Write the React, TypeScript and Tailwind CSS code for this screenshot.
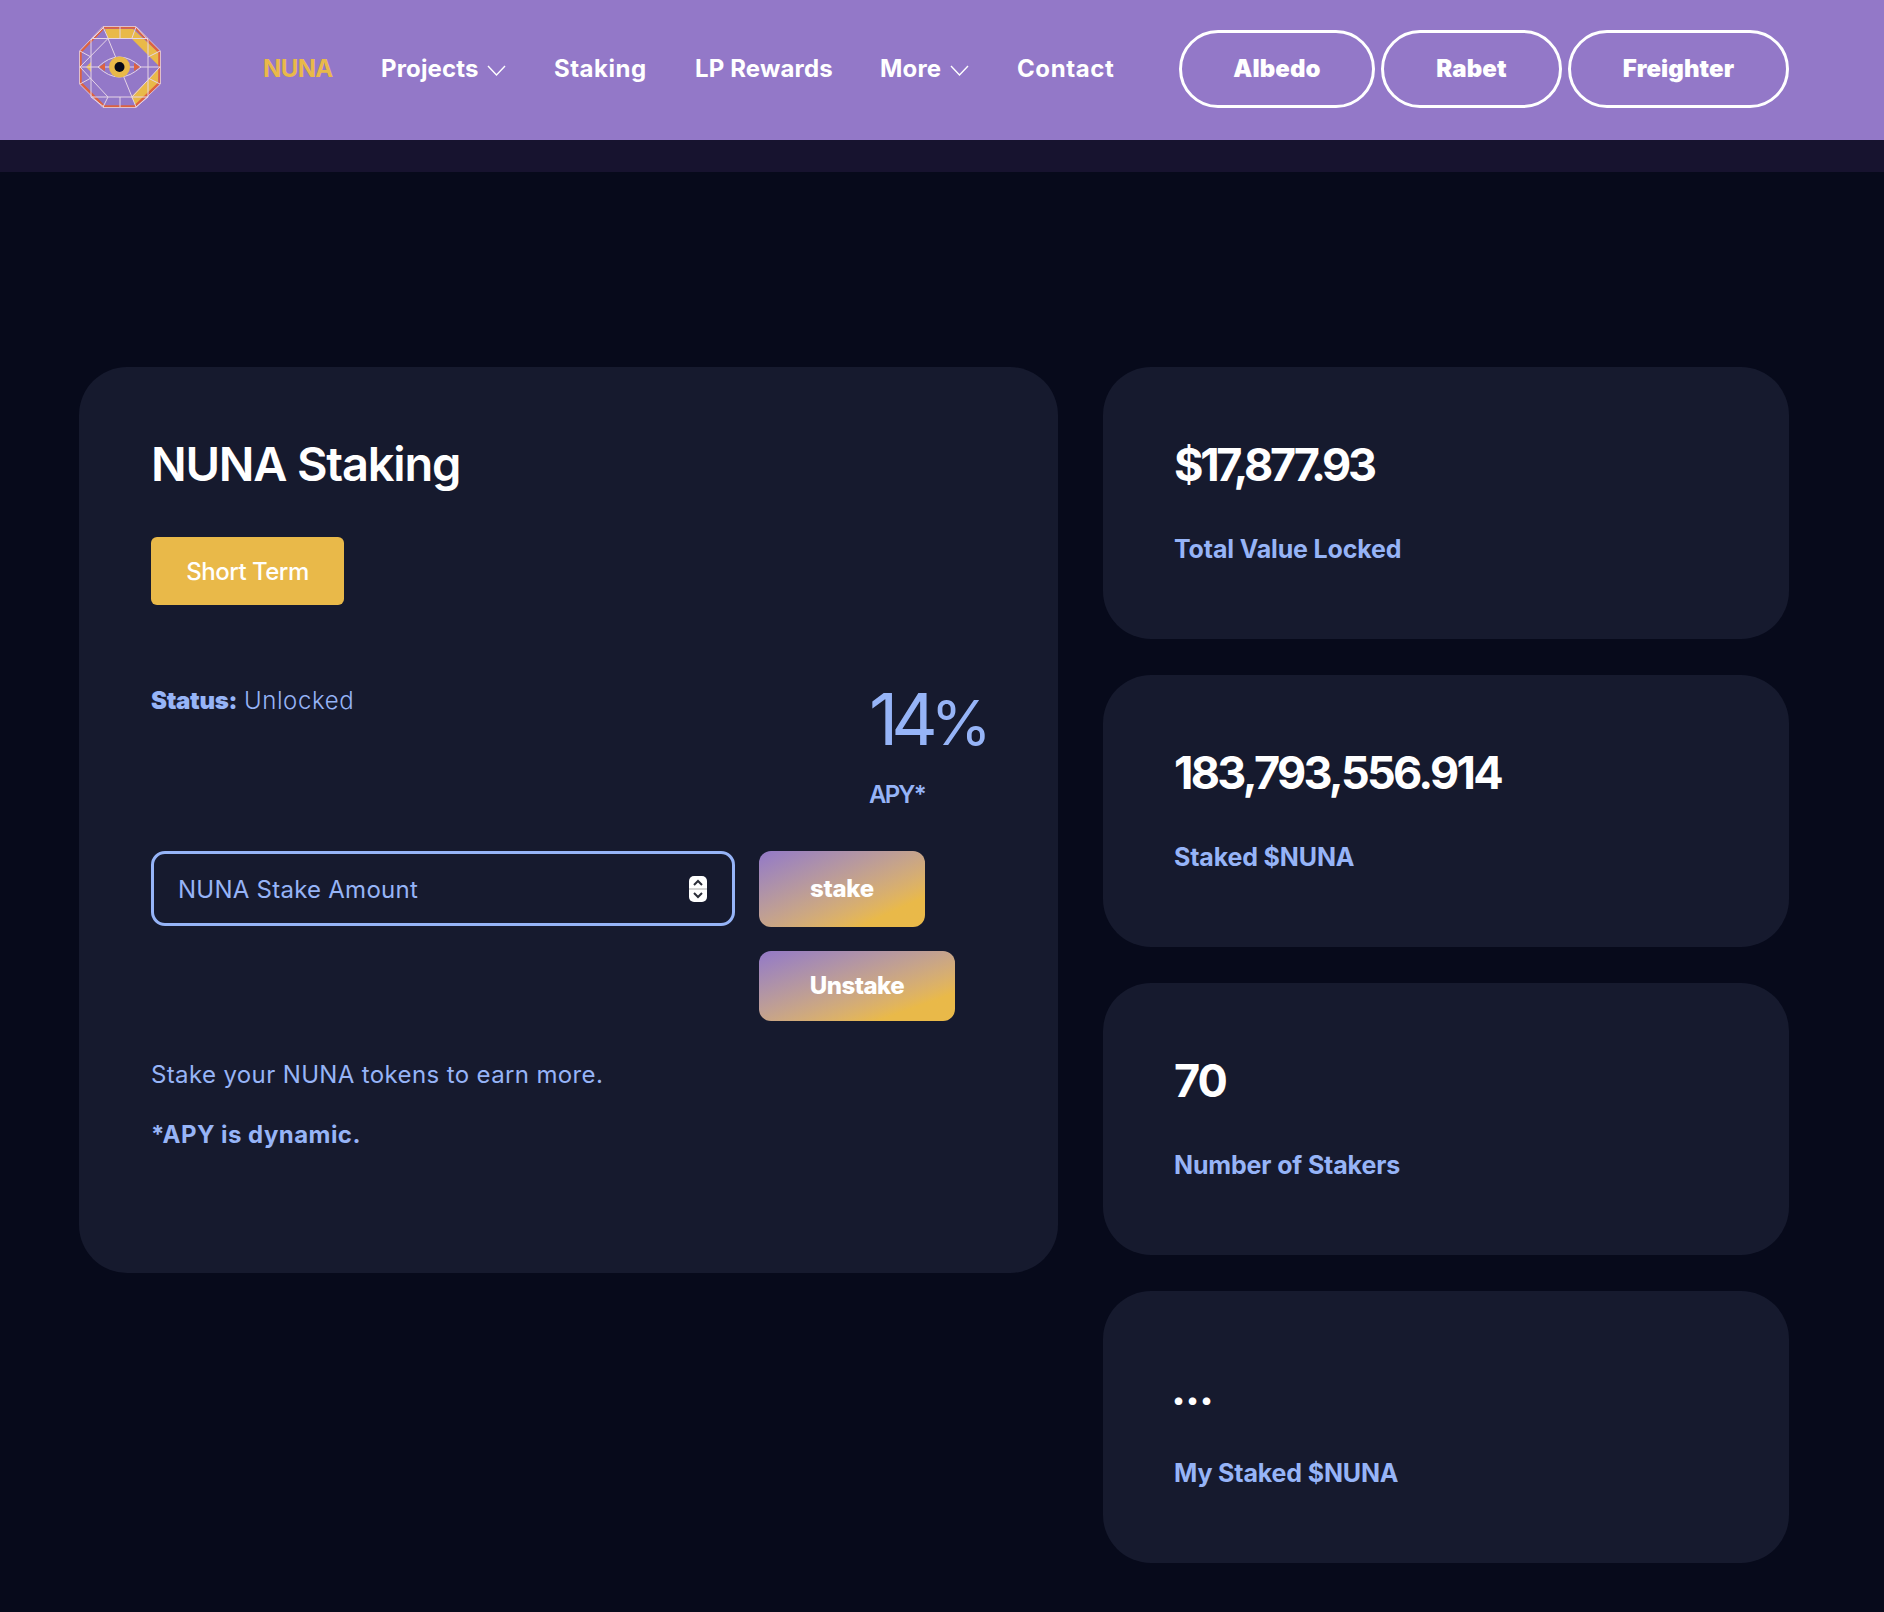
const FONT = "font-['Inter','Liberation_Sans',sans-serif]";

const STATS = [
  { value: "$17,877.93", label: "Total Value Locked", tracking: "tracking-[-3.3px]" },
  { value: "183,793,556.914", label: "Staked $NUNA", tracking: "tracking-[-2.7px]" },
  { value: "70", label: "Number of Stakers", tracking: "tracking-[-2px]" },
  { value: "...", label: "My Staked $NUNA", tracking: "tracking-[-1px] -ml-[3px]" },
];

const Logo = () => (
  <svg width="82" height="82" viewBox="0 0 82 82" fill="none">
    {/* yellow facets */}
    <path d="M26 3H54L80 27V40L69 29L53 13H29Z" fill="#e9b949" />
    <path d="M80 42L79 57L57 79L52 71L69 54Z" fill="#e9b949" />
    <path d="M7 41L12 36V46Z" fill="#e9b949" />
    {/* outer ring */}
    <path d="M25 1.5H56L80.5 26V57L56 80.5H25L1.5 57V26Z" stroke="#dd6240" strokeWidth="2.5" />
    <path d="M24 0.5H57L81.5 25V58L57 81.5H24L0.5 58V25Z" stroke="#e6d5e6" strokeWidth="0.8" />
    {/* wire lines */}
    <g stroke="#e6d5e6" strokeWidth="1">
      <path d="M12 14V71M69 14V71M13 12.5H69M13 71H69" />
      <path d="M0.5 41H81.5M41 1V12M41 71V81" />
      <path d="M29 12.5L53 71M29 12.5L1 41M1 41L29 71M53 71L81 41" />
      <path d="M24 1L29 12M57 1L53 12M12 14L25 1M69 14L57 1M12 71L25 81M69 71L57 81" />
      <path d="M1 25L12 31M81 25L69 31M1 58L12 52M81 58L69 52" />
      <path d="M29 71L24 81M53 71L57 81" />
    </g>
    {/* eye */}
    <path d="M19 41Q40 21 62 41Q40 61 19 41Z" stroke="#e6d5e6" strokeWidth="1" />
    <path d="M20 41L26 37V45Z" fill="#dd6240" />
    <path d="M61 41L55 37V45Z" fill="#dd6240" />
    <circle cx="40.5" cy="41" r="10.5" fill="#e9b949" />
    <circle cx="40.5" cy="41" r="5" fill="#060919" />
  </svg>
);

const Chevron = () => (
  <svg width="19" height="11" viewBox="0 0 19 11" fill="none" className="mt-[3px]">
    <path d="M1 1L9.5 10L18 1" stroke="#fff" strokeWidth="1.4" />
  </svg>
);

const WalletButton = ({ label, width }: { label: string; width: string }) => (
  <button className={`h-[78px] ${width} rounded-[39px] border-[3px] border-white text-[24px] font-black text-white tracking-[0.1px]`}>
    {label}
  </button>
);

const StatCard = ({ value, label, tracking }: { value: string; label: string; tracking: string }) => (
  <div className="h-[272px] rounded-[48px] bg-[#161a2e] pl-[71px] pt-[62px]">
    <div className={`text-[45px] leading-[72px] font-bold text-white ${tracking}`}>{value}</div>
    <div className="mt-[30px] text-[25px] leading-[36px] font-bold text-[#96b4f7] tracking-[-0.15px]">{label}</div>
  </div>
);

export default function App() {
  return (
    <div className={`min-h-[1612px] bg-[#070a1b] ${FONT}`}>
      {/* Navbar */}
      <header className="h-[140px] bg-[#9378c8] pl-[79px] pr-[95px] flex items-center">
        <div className="-mt-[6px]"><Logo /></div>
        <nav className="ml-[102px] flex items-center gap-[48px] text-[24px] font-bold text-white tracking-[0.15px] -mt-[3px] whitespace-nowrap">
          <span className="w-[70px] text-[#e9b949] tracking-[-0.6px]">NUNA</span>
          <span className="w-[125px] flex items-center justify-between">Projects <Chevron /></span>
          <span className="w-[93px] tracking-[0.5px]">Staking</span>
          <span className="w-[137px]">LP Rewards</span>
          <span className="w-[89px] flex items-center justify-between">More <Chevron /></span>
          <span className="tracking-[0.6px]">Contact</span>
        </nav>
        <div className="ml-auto flex items-center gap-[6px] -mt-[3px]">
          <WalletButton label="Albedo" width="w-[196px]" />
          <WalletButton label="Rabet" width="w-[181px]" />
          <WalletButton label="Freighter" width="w-[221px]" />
        </div>
      </header>
      <div className="h-[32px] bg-[#17132f]" />

      <main className="pt-[195px] pl-[79px] pr-[95px] pb-[49px] flex items-start gap-[45px]">
        {/* Staking panel */}
        <section className="w-[979px] rounded-[48px] bg-[#161a2e] pl-[72px] pr-[72px] pt-[61px] pb-[120px] text-[#96b4f7] text-[24px] leading-[36px]">
          <h1 className="text-[47px] leading-[72px] font-semibold text-white tracking-[-1.2px]">NUNA Staking</h1>
          <button className="mt-[37px] h-[68px] w-[193px] rounded-[6px] bg-[#e9b949] text-white font-medium tracking-[-0.5px] pt-[2px]">Short Term</button>

          <div className="mt-[74px] flex justify-between">
            <p className="mt-[4px]"><b className="font-black tracking-[-0.3px]">Status:</b> <span className="font-light tracking-[0.6px]">Unlocked</span></p>
            <div className="w-[117px]">
              <div className="h-[80px] text-[72px] leading-[80px] font-normal tracking-[-7px] whitespace-nowrap">14<span className="text-[62px] leading-[0] tracking-[0px]">%</span></div>
              <div className="mt-[18px] font-semibold tracking-[-1.8px]">APY*</div>
            </div>
          </div>

          <div className="mt-[38px] flex items-start gap-[24px]">
            <div className="relative w-[584px]">
              <input
                type="text"
                placeholder="NUNA Stake Amount"
                className="w-full h-[75px] rounded-[14px] border-[3px] border-[#96b4f7] bg-transparent pl-[24px] pt-[2px] tracking-[0.25px] placeholder:text-[#96b4f7] font-normal outline-none"
              />
              {/* number spinner */}
              <svg className="absolute right-[28px] top-[25px]" width="18" height="26" viewBox="0 0 18 26">
                <rect width="18" height="26" rx="5" fill="#fff" />
                <path d="M0 13H18" stroke="#d4d4d4" strokeWidth="2" />
                <path d="M5 9L9 5L13 9M5 17L9 21L13 17" stroke="#2b2d38" strokeWidth="2" fill="none" />
              </svg>
            </div>
            <div className="flex flex-col items-start gap-[24px] text-white font-extrabold">
              <button className="h-[76px] w-[166px] rounded-[12px] bg-gradient-to-br from-[#9378c8] to-[#e9b949] to-80% tracking-[-0.3px]">stake</button>
              <button className="h-[70px] w-[196px] rounded-[12px] bg-gradient-to-br from-[#9378c8] to-[#e9b949] to-80% tracking-[-0.5px]">Unstake</button>
            </div>
          </div>

          <p className="mt-[36px] font-normal tracking-[0.37px]">Stake your NUNA tokens to earn more.</p>
          <p className="mt-[24px] font-bold tracking-[0.45px]">*APY is dynamic.</p>
        </section>

        {/* Stats */}
        <aside className="w-[686px] flex flex-col gap-[36px]">
          {STATS.map((s) => (
            <StatCard key={s.label} value={s.value} label={s.label} tracking={s.tracking} />
          ))}
        </aside>
      </main>
    </div>
  );
}
